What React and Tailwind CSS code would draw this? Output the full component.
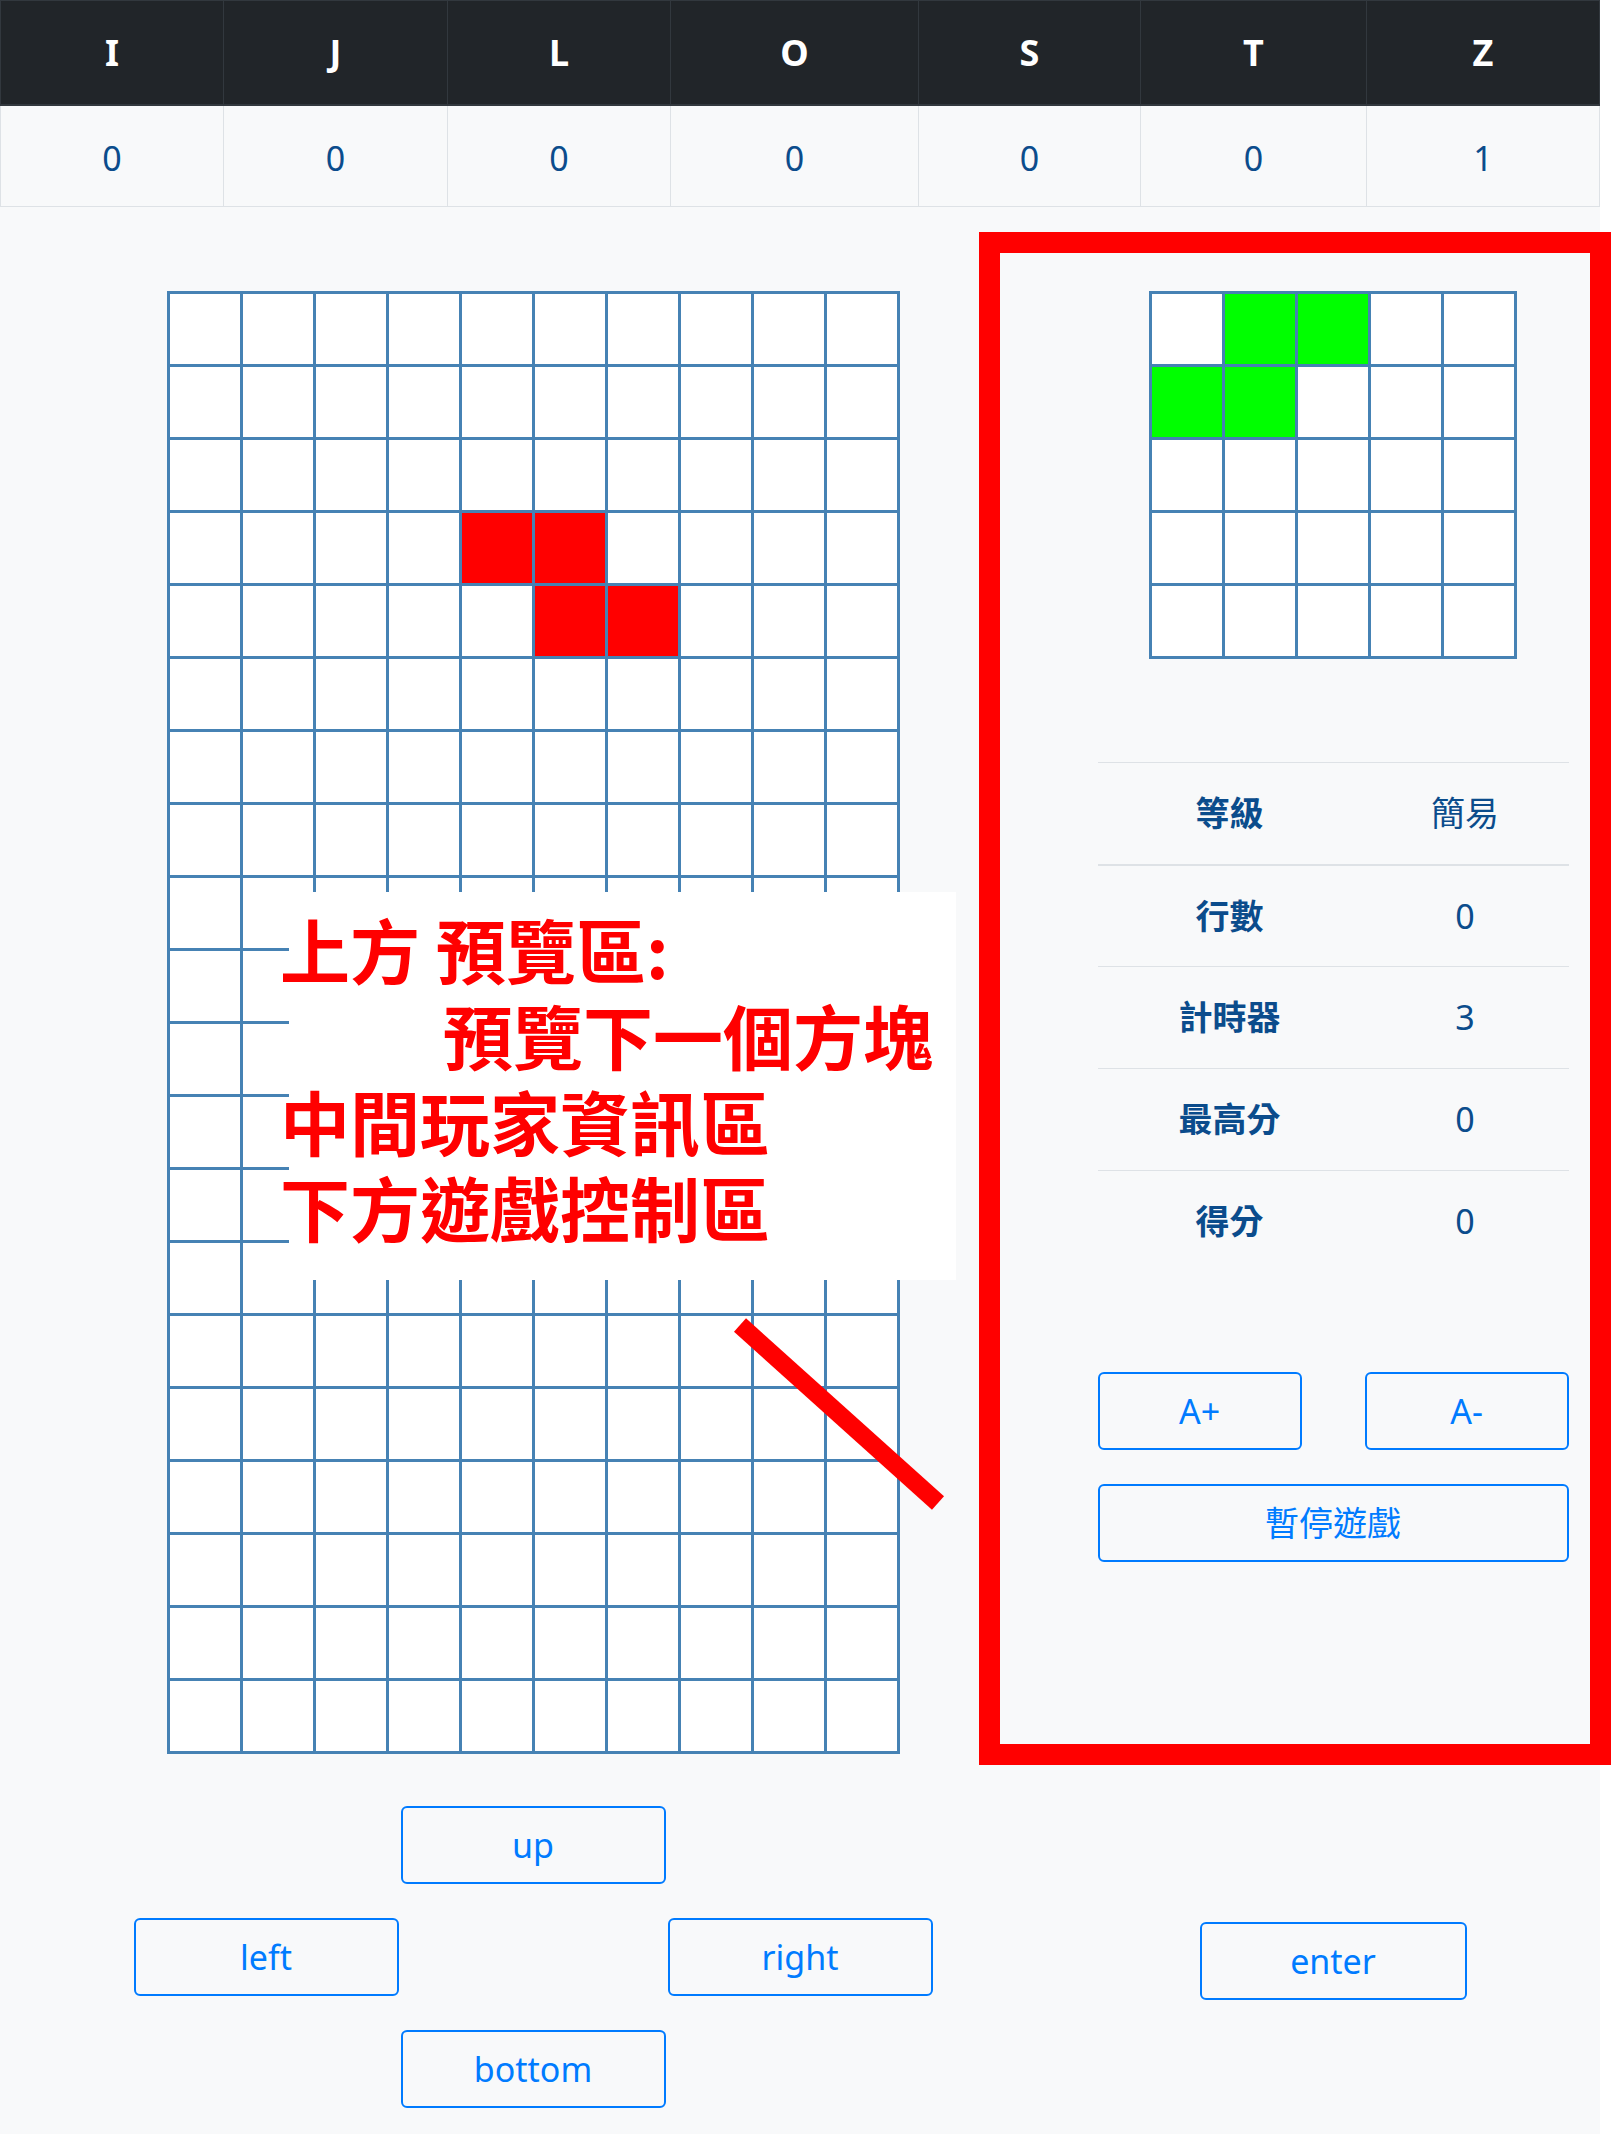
import React from "react";

const PIECES = [
  { name: "I", count: 0, w: "w-[223px]" },
  { name: "J", count: 0, w: "w-[224px]" },
  { name: "L", count: 0, w: "w-[223px]" },
  { name: "O", count: 0, w: "w-[248px]" },
  { name: "S", count: 0, w: "w-[222px]" },
  { name: "T", count: 0, w: "w-[226px]" },
  { name: "Z", count: 1, w: "w-[233px]" },
];

const STATS = [
  { label: "等級", value: "簡易" },
  { label: "行數", value: "0" },
  { label: "計時器", value: "3" },
  { label: "最高分", value: "0" },
  { label: "得分", value: "0" },
];

// falling Z piece on the board
const isActive = (r, c) =>
  (r === 3 && (c === 4 || c === 5)) || (r === 4 && (c === 5 || c === 6));

// next piece (S) in the preview
const isNext = (r, c) =>
  (r === 0 && (c === 1 || c === 2)) || (r === 1 && (c === 0 || c === 1));

const OutlineButton = ({ children, className = "" }) => (
  <button
    className={`h-[78px] rounded-[6px] border-2 border-[#007bff] bg-transparent text-[34px] leading-none text-[#007bff] ${className}`}
  >
    {children}
  </button>
);

const App = () => {
  const board = Array.from({ length: 20 }, (_, r) =>
    Array.from({ length: 10 }, (_, c) => isActive(r, c))
  );
  const preview = Array.from({ length: 5 }, (_, r) =>
    Array.from({ length: 5 }, (_, c) => isNext(r, c))
  );

  return (
    <div className="relative w-[1600px] min-h-[2134px] bg-[#f8f9fa] font-['Noto_Sans','Noto_Sans_CJK_TC',sans-serif]">
      {/* piece counter */}
      <table className="table-fixed border-collapse border border-[#dee2e6]">
        <thead>
          <tr className="h-[104px] bg-[#212529]">
            {PIECES.map((p) => (
              <th
                key={p.name}
                className={`${p.w} border border-b-2 border-[#32383e] pt-[2px] text-center text-[36px] font-bold text-white`}
              >
                {p.name}
              </th>
            ))}
          </tr>
        </thead>
        <tbody>
          <tr className="h-[102px]">
            {PIECES.map((p) => (
              <td
                key={p.name}
                className="border border-[#dee2e6] pt-[5px] text-center text-[34px] text-[#0b4c8c]"
              >
                {p.count}
              </td>
            ))}
          </tr>
        </tbody>
      </table>

      {/* game + info */}
      <div className="mt-[84px] flex">
        <div className="flex w-[1066px] justify-center">
          <div className="grid grid-cols-[repeat(10,70px)] gap-[3px] bg-[#4682b4] p-[3px]">
            {board.flat().map((on, i) => (
              <div
                key={i}
                className={on ? "h-[70px] bg-[#ff0000]" : "h-[70px] bg-white"}
              />
            ))}
          </div>
        </div>

        <div className="flex w-[534px] flex-col items-center">
          <div className="grid grid-cols-[repeat(5,70px)] gap-[3px] bg-[#4682b4] p-[3px]">
            {preview.flat().map((on, i) => (
              <div
                key={i}
                className={on ? "h-[70px] bg-[#00ff00]" : "h-[70px] bg-white"}
              />
            ))}
          </div>

          <div className="mt-[103px] w-[471px] text-[34px] text-[#0b4c8c]">
            {STATS.map((s, i) => (
              <div
                key={s.label}
                className={
                  i === 1
                    ? "flex h-[102px] items-center border-t-2 border-[#dee2e6]"
                    : "flex h-[102px] items-center border-t border-[#dee2e6]"
                }
              >
                <div className="w-[264px] text-center font-bold">{s.label}</div>
                <div className="w-[207px] text-center">{s.value}</div>
              </div>
            ))}
          </div>

          <div className="mt-[100px] flex w-[471px] justify-between">
            <OutlineButton className="w-[204px]">A+</OutlineButton>
            <OutlineButton className="w-[204px]">A-</OutlineButton>
          </div>
          <OutlineButton className="mt-[34px] w-[471px]">暫停遊戲</OutlineButton>
        </div>
      </div>

      {/* controls */}
      <div className="mt-[52px] flex">
        <div className="flex w-[1066px] flex-col items-center gap-[34px]">
          <OutlineButton className="w-[265px]">up</OutlineButton>
          <div className="flex gap-[269px]">
            <OutlineButton className="w-[265px]">left</OutlineButton>
            <OutlineButton className="w-[265px]">right</OutlineButton>
          </div>
          <OutlineButton className="w-[265px]">bottom</OutlineButton>
        </div>
        <div className="flex w-[534px] items-center justify-center pt-[8px]">
          <OutlineButton className="w-[267px]">enter</OutlineButton>
        </div>
      </div>

      {/* annotation overlay */}
      <div className="absolute left-[979px] top-[232px] h-[1533px] w-[632px] border-[21px] border-[#ff0000]" />
      <div className="absolute left-[289px] top-[892px] h-[388px] w-[667px] bg-white">
        <div className="-ml-[9px] pt-[14px] text-[70px] font-bold leading-[86px] text-[#ff0000] font-['Noto_Sans_CJK_TC',sans-serif]">
          <div>上方 預覽區:</div>
          <div className="pl-[163px]">預覽下一個方塊</div>
          <div>中間玩家資訊區</div>
          <div>下方遊戲控制區</div>
        </div>
      </div>
      <svg
        className="absolute left-0 top-0 pointer-events-none"
        width="1611"
        height="2134"
      >
        <line
          x1="740"
          y1="1325"
          x2="938"
          y2="1503"
          stroke="#ff0000"
          strokeWidth="18"
        />
      </svg>
    </div>
  );
};

export default App;
